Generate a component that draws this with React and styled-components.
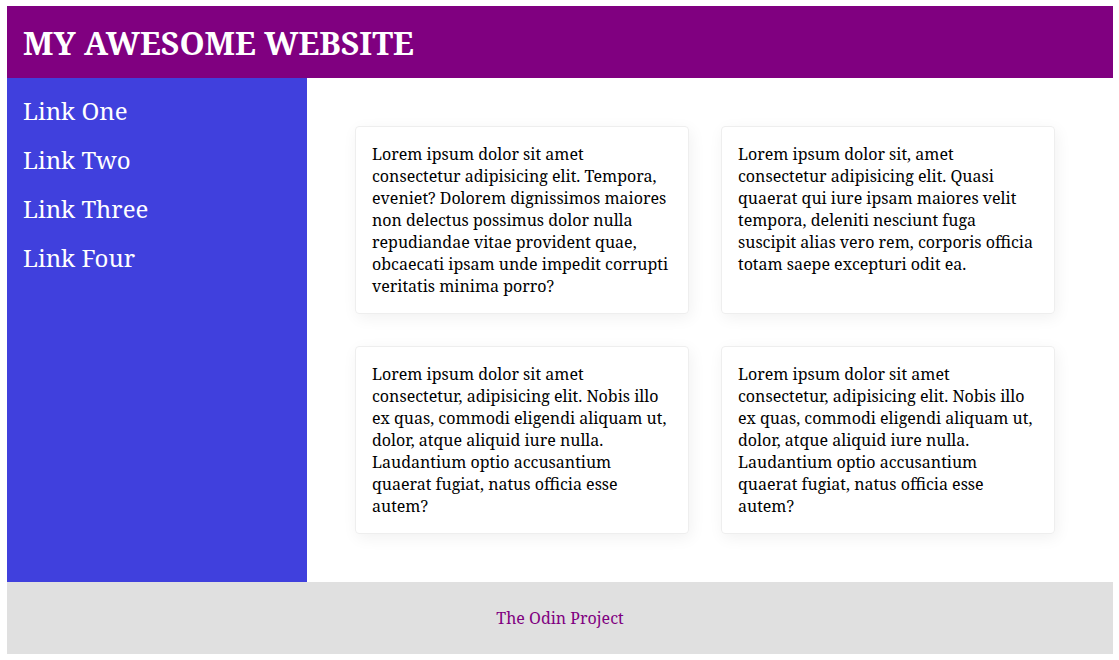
import styled, { createGlobalStyle } from 'styled-components';

const GlobalStyle = createGlobalStyle`
  html, body {
    margin: 0;
    padding: 0;
    background: #fff;
  }
  body {
    padding: 6px 6px 6px 7px;
    font-family: "Noto Serif", "DejaVu Serif", serif;
    font-size: 16px;
  }
`;

const Page = styled.div`
  display: grid;
  grid-template-columns: 300px 1fr;
  grid-template-rows: 72px auto 72px;
  min-height: 648px;
`;

const Header = styled.header`
  grid-column: 1 / -1;
  background-color: purple;
  color: #fff;
  display: flex;
  align-items: center;
  padding: 0 16px;
`;

const Title = styled.h1`
  margin: 0;
  font-size: 32px;
  font-weight: 700;
`;

const Sidebar = styled.nav`
  background-color: #4040dd;
  padding: 17px 16px 16px;
  display: flex;
  flex-direction: column;
  gap: 17px;
`;

const NavLink = styled.a`
  color: #fff;
  font-size: 24px;
  line-height: 32px;
  text-decoration: none;
`;

const Main = styled.main`
  padding: 48px;
  display: grid;
  grid-template-columns: repeat(2, 334px);
  grid-auto-rows: max-content;
  column-gap: 32px;
  row-gap: 32px;
`;

const Card = styled.div`
  border: 1px solid #eee;
  border-radius: 4px;
  box-shadow: 2px 4px 16px rgba(0, 0, 0, 0.06);
  padding: 16px;
  line-height: 22px;
  color: #000;
`;

const Footer = styled.footer`
  grid-column: 1 / -1;
  background-color: #e0e0e0;
  color: purple;
  display: flex;
  align-items: center;
  justify-content: center;
`;

const links = ['Link One', 'Link Two', 'Link Three', 'Link Four'];

const cards = [
  'Lorem ipsum dolor sit amet consectetur adipisicing elit. Tempora, eveniet? Dolorem dignissimos maiores non delectus possimus dolor nulla repudiandae vitae provident quae, obcaecati ipsam unde impedit corrupti veritatis minima porro?',
  'Lorem ipsum dolor sit, amet consectetur adipisicing elit. Quasi quaerat qui iure ipsam maiores velit tempora, deleniti nesciunt fuga suscipit alias vero rem, corporis officia totam saepe excepturi odit ea.',
  'Lorem ipsum dolor sit amet consectetur, adipisicing elit. Nobis illo ex quas, commodi eligendi aliquam ut, dolor, atque aliquid iure nulla. Laudantium optio accusantium quaerat fugiat, natus officia esse autem?',
  'Lorem ipsum dolor sit amet consectetur, adipisicing elit. Nobis illo ex quas, commodi eligendi aliquam ut, dolor, atque aliquid iure nulla. Laudantium optio accusantium quaerat fugiat, natus officia esse autem?',
];

const App = () => {
  return (
    <>
      <GlobalStyle />
      <Page>
        <Header>
          <Title>MY AWESOME WEBSITE</Title>
        </Header>
        <Sidebar>
          {links.map((l) => (
            <NavLink key={l} href="#">{l}</NavLink>
          ))}
        </Sidebar>
        <Main>
          {cards.map((text, i) => (
            <Card key={i}>{text}</Card>
          ))}
        </Main>
        <Footer>The Odin Project</Footer>
      </Page>
    </>
  );
};

export default App;
